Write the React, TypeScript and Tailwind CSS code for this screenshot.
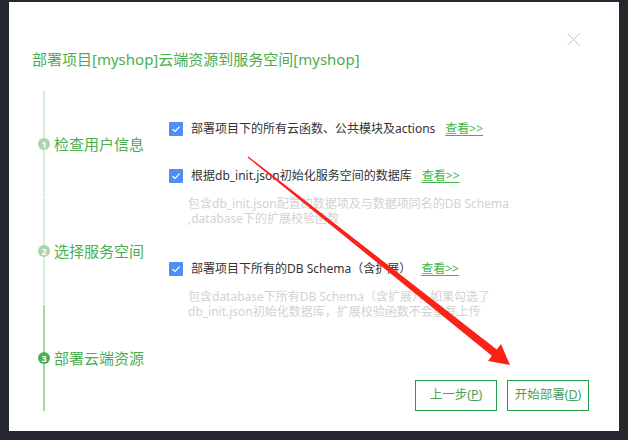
import React from "react";

const green = "text-[#4aae4f]";

const CheckBox: React.FC = () => (
  <span className="flex h-[14px] w-[14px] shrink-0 items-center justify-center rounded-[1px] bg-[#4f8ef5]">
    <svg width="10" height="8" viewBox="0 0 10 8" fill="none">
      <path d="M1.5 4.2 L4 6.4 L8.6 1.6" stroke="white" strokeWidth="1.3" />
    </svg>
  </span>
);

interface OptionProps {
  label: string;
  desc?: string[];
  top: string;
}

const Option: React.FC<OptionProps> = ({ label, desc, top }) => (
  <div className={top}>
    <div className="flex h-[20px] items-center">
      <CheckBox />
      <span className="ml-[8px] text-[12px] text-[#333]">{label}</span>
      <a className="ml-[10px] text-[12px] text-[#3db54a] underline underline-offset-2">
        查看&gt;&gt;
      </a>
    </div>
    {desc && (
      <div className="mt-[11px] pl-[19px] text-[12px] leading-[14.5px] text-[#d2d2d2]">
        {desc.map((d) => (
          <div key={d}>{d}</div>
        ))}
      </div>
    )}
  </div>
);

interface StepProps {
  n: number;
  label: string;
  active?: boolean;
}

const Step: React.FC<StepProps> = ({ n, label, active = false }) => (
  <div
    className={`relative flex h-[106px] items-center border-l-2 pl-[9px] ${
      active ? "border-[#a6d7a8]" : "border-[#d7edd8]"
    }`}
  >
    <span
      className={`absolute left-[-7px] flex h-[12px] w-[12px] items-center justify-center rounded-full text-[9px] font-bold leading-none text-white ${
        active ? "bg-[#4caf50]" : "bg-[#aad5ab]"
      }`}
    >
      {n}
    </span>
    <span className={`text-[15px] ${green}`}>{label}</span>
  </div>
);

export default function App() {
  return (
    <div className="relative h-[440px] w-[628px] overflow-hidden bg-[#25282f] pl-[9px] pt-[2px] font-['Noto_Sans','Noto_Sans_CJK_SC',sans-serif]">
      <div className="flex h-[429px] w-[610px] flex-col bg-white px-[23px]">
        {/* header */}
        <div className="flex justify-end pr-[16px] pt-[31px]">
          <svg width="13" height="13" viewBox="0 0 13 13">
            <path d="M0.5 0.5 L12.5 12.5 M12.5 0.5 L0.5 12.5" stroke="#c4c4c4" strokeWidth="1" />
          </svg>
        </div>
        <h1 className={`mt-[3px] text-[15px] leading-[20px] ${green}`}>
          部署项目[myshop]云端资源到服务空间[myshop]
        </h1>

        {/* body */}
        <div className="mt-[22px] flex">
          <div className="ml-[11px] flex w-[126px] flex-col gap-px">
            <Step n={1} label="检查用户信息" />
            <Step n={2} label="选择服务空间" />
            <Step n={3} label="部署云端资源" active />
          </div>

          <div className="flex flex-1 flex-col pr-[7px] pt-[28px]">
            <Option top="" label="部署项目下的所有云函数、公共模块及actions" />
            <Option
              top="mt-[27px]"
              label="根据db_init.json初始化服务空间的数据库"
              desc={[
                "包含db_init.json配置的数据项及与数据项同名的DB Schema",
                ",database下的扩展校验函数",
              ]}
            />
            <Option
              top="mt-[33px]"
              label="部署项目下所有的DB Schema（含扩展）"
              desc={[
                "包含database下所有DB Schema（含扩展），如果勾选了",
                "db_init.json初始化数据库，扩展校验函数不会重复上传",
              ]}
            />

            <div className="mt-auto flex justify-end gap-[10px]">
              <button className="h-[31px] w-[82px] border border-[#1f9d48] text-[12.5px] text-[#4a9f5c]">
                上一步(<span className="underline">P</span>)
              </button>
              <button className="h-[31px] w-[82px] border border-[#1f9d48] text-[12.5px] text-[#4a9f5c]">
                开始部署(<span className="underline">D</span>)
              </button>
            </div>
          </div>
        </div>
      </div>

      {/* red annotation arrow */}
      <svg
        className="pointer-events-none absolute left-0 top-0"
        width="628"
        height="440"
        viewBox="0 0 628 440"
      >
        <path
          d="M247.6 157.5 L248.4 156.5 L496.8 349.5 L501 344 L510 365 L488 361 L491.8 355.7 Z"
          fill="#fb2317"
        />
      </svg>
    </div>
  );
}
